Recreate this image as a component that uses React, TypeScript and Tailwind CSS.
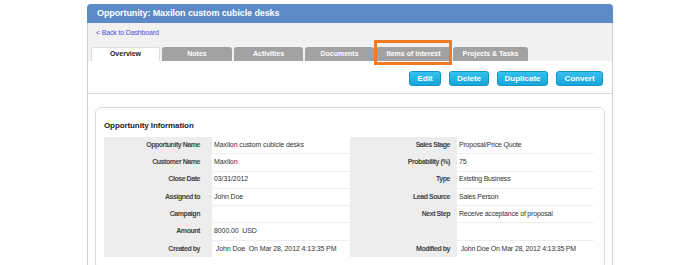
import React from 'react';

const tabs = [
  { label: 'Overview', w: 'w-[69px]', active: true },
  { label: 'Notes', w: 'w-[70px]' },
  { label: 'Activities', w: 'w-[69px]' },
  { label: 'Documents', w: 'w-[69px]' },
  { label: 'Items of Interest', w: 'w-[75px]', highlight: true },
  { label: 'Projects & Tasks', w: 'w-[75px]' },
];

const buttons = [
  { label: 'Edit', w: 'w-[32px]' },
  { label: 'Delete', w: 'w-[40px]' },
  { label: 'Duplicate', w: 'w-[51px]' },
  { label: 'Convert', w: 'w-[47px]' },
];

const rows: [string, string, string, string][] = [
  ['Opportunity Name', 'Maxilon custom cubicle desks', 'Sales Stage', 'Proposal/Price Quote'],
  ['Customer Name', 'Maxilon', 'Probability (%)', '75'],
  ['Close Date', '03/31/2012', 'Type', 'Existing Business'],
  ['Assigned to', 'John Doe', 'Lead Source', 'Sales Person'],
  ['Campaign', '', 'Next Step', 'Receive acceptance of proposal'],
  ['Amount', '8000.00  USD', '', ''],
  ['Created by', '\u00a0John Doe  On Mar 28, 2012 4:13:35 PM', 'Modified by', '\u00a0John Doe On Mar 28, 2012 4:13:35 PM'],
];

export default function App() {
  return (
    <div className="min-h-[265px] overflow-hidden bg-white pt-[4px] font-['Liberation_Sans',Arial,sans-serif] text-[#333]">
      <div className="ml-[87px] w-[526px]">
        {/* title bar */}
        <div className="flex h-[19px] items-center rounded-t-[4px] bg-[#5b8ac6] pl-[10px] text-[9px] font-bold tracking-[-0.1px] text-white">
          Opportunity: Maxilon custom cubicle desks
        </div>

        <div className="border-x border-[#cfcfcf]">
          {/* grey header with tabs */}
          <div className="bg-[#f1f1f1] px-[3px] pt-[5px]">
            <a className="ml-[5px] block h-[10px] cursor-pointer text-[7px] leading-[10px] tracking-[-0.15px] text-[#4d4ddc]">
              &lt; Back to Dashboard
            </a>
            <div className="mt-[9px] flex gap-[2px]">
              {tabs.map((t) => (
                <div
                  key={t.label}
                  className={`relative flex h-[14px] items-center justify-center rounded-t-[3px] text-[7px] font-bold ${t.w} ${
                    t.active ? 'border-x border-t border-[#dedede] bg-white text-[#222]' : 'bg-[#a2a2a2] text-white'
                  }`}
                >
                  {t.label}
                  {t.highlight && (
                    <div className="absolute left-[-2px] top-[-7px] h-[25px] w-[78px] border-[3px] border-[#f47a22]" />
                  )}
                </div>
              ))}
            </div>
          </div>

          {/* action buttons */}
          <div className="flex justify-end gap-[8px] border-b border-[#d6d6d6] bg-white pb-[7px] pr-[9px] pt-[10px]">
            {buttons.map((b) => (
              <button
                key={b.label}
                className={`flex h-[15px] items-center justify-center rounded-[3px] border border-[#0f95c6] bg-linear-to-b from-[#35c0ee] to-[#13a6da] text-[8px] font-bold text-white ${b.w}`}
              >
                {b.label}
              </button>
            ))}
          </div>

          {/* info box */}
          <div className="bg-white px-[7px] pt-[13px]">
            <div className="rounded-[6px] border border-[#dcdcdc] pb-[12px] pl-[8px] pr-[10px] pt-[13px]">
              <div className="h-[10px] text-[8px] font-bold leading-[10px] tracking-[-0.1px] text-[#222]">
                Opportunity Information
              </div>
              <div className="mt-[6px] flex flex-col gap-[1px] bg-[#eeeeee]">
                {rows.map((r, i) => (
                  <div key={i} className="grid h-[16.3px] grid-cols-[108px_138px_107px_137px] text-[7px]">
                    <div className="flex items-center justify-end bg-[#ededed] pr-[12px] font-bold tracking-[-0.45px] text-[#444]">
                      {r[0]}
                    </div>
                    <div className="flex items-center whitespace-pre bg-white pl-[2px] tracking-[-0.1px]">{r[1]}</div>
                    <div className="flex items-center justify-end bg-[#ededed] pr-[7px] font-bold tracking-[-0.45px] text-[#444]">
                      {r[2]}
                    </div>
                    <div className="flex items-center whitespace-pre bg-white pl-[2px] tracking-[-0.2px]">{r[3]}</div>
                  </div>
                ))}
              </div>
            </div>
          </div>
        </div>
      </div>
    </div>
  );
}
